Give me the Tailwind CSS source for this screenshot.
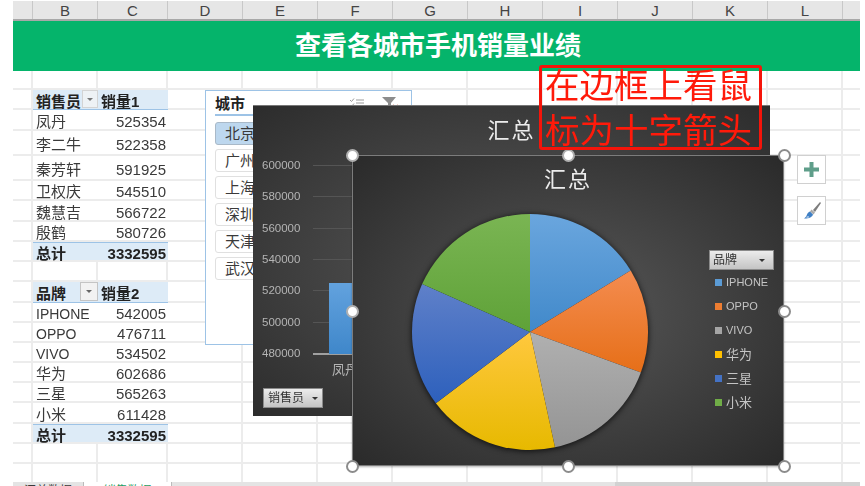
<!DOCTYPE html>
<html lang="zh-CN">

<head>
  <meta charset="UTF-8">
  <title>查看各城市手机销量业绩</title>
  <script src="https://cdn.jsdelivr.net/npm/@tailwindcss/browser@4"></script>
</head>

<body class="bg-white">
  <div class="relative w-[865px] h-[486px] overflow-hidden pl-[13px] pt-px blur-[0.4px] text-[#3a3a3a] font-['Liberation_Sans','Noto_Sans_CJK_SC',sans-serif]">
    <div class="relative w-[847px]">
      <!-- column letters -->
      <div class="flex h-[20px] bg-[#e6e6e6] border-b-2 border-[#a8a8a8] text-[15px] leading-[19px] text-[#444] text-center">
        <div class="w-[20px] border-r border-[#c8c8c8]"></div>
        <div class="w-[65px] border-r border-[#c8c8c8]">B</div>
        <div class="w-[70px] border-r border-[#c8c8c8]">C</div>
        <div class="w-[75px] border-r border-[#c8c8c8]">D</div>
        <div class="w-[75px] border-r border-[#c8c8c8]">E</div>
        <div class="w-[75px] border-r border-[#c8c8c8]">F</div>
        <div class="w-[75px] border-r border-[#c8c8c8]">G</div>
        <div class="w-[75px] border-r border-[#c8c8c8]">H</div>
        <div class="w-[75px] border-r border-[#c8c8c8]">I</div>
        <div class="w-[75px] border-r border-[#c8c8c8]">J</div>
        <div class="w-[75px] border-r border-[#c8c8c8]">K</div>
        <div class="w-[75px] border-r border-[#c8c8c8]">L</div>
        <div class="flex-1"></div>
      </div>

      <!-- banner -->
      <div class="flex items-center justify-center h-[50px] pl-[3px] bg-[#05b46b] text-white text-[26px] font-bold">查看各城市手机销量业绩</div>

      <!-- cells -->
      <div class="relative">
        <!-- vertical gridlines -->
        <div class="absolute inset-0 flex">
          <div class="w-[20px] border-r-2 border-[#ececec]"></div>
          <div class="w-[65px] border-r-2 border-[#ececec]"></div>
          <div class="w-[70px] border-r-2 border-[#ececec]"></div>
          <div class="w-[75px] border-r-2 border-[#ececec]"></div>
          <div class="w-[75px] border-r-2 border-[#ececec]"></div>
          <div class="w-[75px] border-r-2 border-[#ececec]"></div>
          <div class="w-[75px] border-r-2 border-[#ececec]"></div>
          <div class="w-[75px] border-r-2 border-[#ececec]"></div>
          <div class="w-[75px] border-r-2 border-[#ececec]"></div>
          <div class="w-[75px] border-r-2 border-[#ececec]"></div>
          <div class="w-[75px] border-r-2 border-[#ececec]"></div>
          <div class="w-[75px] border-r-2 border-[#ececec]"></div>
        </div>

        <div class="relative text-[15px] leading-none">
          <div class="h-[19px] border-b-2 border-[#ececec]"></div>

          <div class="flex h-[20px] pl-[20px] border-b-2 border-[#ececec] font-bold text-[#222]">
            <div class="relative flex items-center w-[65px] pl-[3px] pt-[3px] -mb-[2px] bg-[#ddebf7] border-b border-[#9dc3e6]">销售员
              <div class="absolute right-0 top-0 flex items-center justify-center w-[16px] h-[18px] bg-[#eef2f5] border border-[#d4d4d4]"><div class="border-x-[3px] border-t-[3px] border-x-transparent border-t-[#777]"></div></div>
            </div>
            <div class="flex items-center w-[70px] pl-[3px] pt-[3px] -mb-[2px] bg-[#ddebf7] border-b border-[#9dc3e6]">销量1</div>
          </div>
          <div class="flex h-[21px] pl-[20px] border-b-2 border-[#ececec]">
            <div class="flex items-center w-[65px] pl-[3px] pt-[3px] bg-white">凤丹</div>
            <div class="flex items-center justify-end w-[70px] pr-[2px] pt-[3px] bg-white">525354</div>
          </div>
          <div class="flex h-[25px] pl-[20px] border-b-2 border-[#ececec]">
            <div class="flex items-center w-[65px] pl-[3px] pt-[3px] bg-white">李二牛</div>
            <div class="flex items-center justify-end w-[70px] pr-[2px] pt-[3px] bg-white">522358</div>
          </div>
          <div class="flex h-[25px] pl-[20px] border-b-2 border-[#ececec]">
            <div class="flex items-center w-[65px] pl-[3px] pt-[3px] bg-white">秦芳轩</div>
            <div class="flex items-center justify-end w-[70px] pr-[2px] pt-[3px] bg-white">591925</div>
          </div>
          <div class="flex h-[20px] pl-[20px] border-b-2 border-[#ececec]">
            <div class="flex items-center w-[65px] pl-[3px] pt-[3px] bg-white">卫权庆</div>
            <div class="flex items-center justify-end w-[70px] pr-[2px] pt-[3px] bg-white">545510</div>
          </div>
          <div class="flex h-[21px] pl-[20px] border-b-2 border-[#ececec]">
            <div class="flex items-center w-[65px] pl-[3px] pt-[3px] bg-white">魏慧吉</div>
            <div class="flex items-center justify-end w-[70px] pr-[2px] pt-[3px] bg-white">566722</div>
          </div>
          <div class="flex h-[20px] pl-[20px] border-b-2 border-[#ececec]">
            <div class="flex items-center w-[65px] pl-[3px] pt-[3px] bg-white">殷鹤</div>
            <div class="flex items-center justify-end w-[70px] pr-[2px] pt-[3px] bg-white">580726</div>
          </div>
          <div class="flex h-[20px] pl-[20px] border-b-2 border-[#ececec] font-bold text-[#222]">
            <div class="flex items-center w-[65px] pl-[3px] pt-[3px] bg-[#ddebf7] border-t border-[#9dc3e6]">总计</div>
            <div class="flex items-center justify-end w-[70px] pr-[2px] pt-[3px] bg-[#ddebf7] border-t border-[#9dc3e6]">3332595</div>
          </div>
          <div class="h-[20px] border-b-2 border-[#ececec]"></div>

          <div class="flex h-[21px] pl-[20px] border-b-2 border-[#ececec] font-bold text-[#222]">
            <div class="relative flex items-center w-[65px] pl-[3px] pt-[3px] -mb-[2px] bg-[#ddebf7] border-b border-[#9dc3e6]">品牌
              <div class="absolute right-0 top-0 flex items-center justify-center w-[18px] h-[19px] bg-[#f2f2f2] border border-[#c4c4c4]"><div class="border-x-[3px] border-t-[3px] border-x-transparent border-t-[#666]"></div></div>
            </div>
            <div class="flex items-center w-[70px] pl-[3px] pt-[3px] -mb-[2px] bg-[#ddebf7] border-b border-[#9dc3e6]">销量2</div>
          </div>
          <div class="flex h-[20px] pl-[20px] border-b-2 border-[#ececec]">
            <div class="flex items-center w-[65px] pl-[3px] pt-[3px] bg-white text-[14px]">IPHONE</div>
            <div class="flex items-center justify-end w-[70px] pr-[2px] pt-[3px] bg-white">542005</div>
          </div>
          <div class="flex h-[20px] pl-[20px] border-b-2 border-[#ececec]">
            <div class="flex items-center w-[65px] pl-[3px] pt-[3px] bg-white text-[14px]">OPPO</div>
            <div class="flex items-center justify-end w-[70px] pr-[2px] pt-[3px] bg-white">476711</div>
          </div>
          <div class="flex h-[20px] pl-[20px] border-b-2 border-[#ececec]">
            <div class="flex items-center w-[65px] pl-[3px] pt-[3px] bg-white text-[14px]">VIVO</div>
            <div class="flex items-center justify-end w-[70px] pr-[2px] pt-[3px] bg-white">534502</div>
          </div>
          <div class="flex h-[20px] pl-[20px] border-b-2 border-[#ececec]">
            <div class="flex items-center w-[65px] pl-[3px] pt-[3px] bg-white">华为</div>
            <div class="flex items-center justify-end w-[70px] pr-[2px] pt-[3px] bg-white">602686</div>
          </div>
          <div class="flex h-[20px] pl-[20px] border-b-2 border-[#ececec]">
            <div class="flex items-center w-[65px] pl-[3px] pt-[3px] bg-white">三星</div>
            <div class="flex items-center justify-end w-[70px] pr-[2px] pt-[3px] bg-white">565263</div>
          </div>
          <div class="flex h-[21px] pl-[20px] border-b-2 border-[#ececec]">
            <div class="flex items-center w-[65px] pl-[3px] pt-[3px] bg-white">小米</div>
            <div class="flex items-center justify-end w-[70px] pr-[2px] pt-[3px] bg-white">611428</div>
          </div>
          <div class="flex h-[20px] pl-[20px] border-b-2 border-[#ececec] font-bold text-[#222]">
            <div class="flex items-center w-[65px] pl-[3px] pt-[3px] bg-[#ddebf7] border-t border-[#9dc3e6]">总计</div>
            <div class="flex items-center justify-end w-[70px] pr-[2px] pt-[3px] bg-[#ddebf7] border-t border-[#9dc3e6]">3332595</div>
          </div>
          <div class="h-[20px] border-b-2 border-[#ececec]"></div>
          <div class="h-[18px]"></div>
        </div>
      </div>

      <!-- sheet tabs, cut off by the window -->
      <div class="relative flex h-[20px] bg-[#e4e4e4] text-[12px] leading-none">
        <div class="w-[71px] pt-[3px] text-center border-r border-[#bbb]">汇总数据</div>
        <div class="w-[88px] pt-[3px] text-center bg-white text-[#1f9d63] border-r border-[#bbb]">销售数据</div>
        <div class="w-[443px]"></div>
        <div class="flex-1 bg-[#d2d2d2]"></div>
      </div>
    </div>

    <!-- slicer -->
    <div class="absolute left-[205px] top-[90px] w-[207px] h-[255px] px-[9px] pt-[3px] bg-white border border-[#9dc3e6] text-[15px] leading-none">
      <div class="flex items-center h-[22px] border-b-2 border-[#9dc3e6] pb-[2px] font-bold text-[#222] whitespace-nowrap">
        <span>城市</span>
        <svg class="ml-[105px]" width="14" height="10" viewBox="0 0 14 10" fill="none" stroke="#9a9a9a" stroke-width="1"><path d="M0 2l1.500 1.500L4 0.500M0 7l1.500 1.500L4 5.500M6 2h8M6 5h8M6 8h8" /></svg>
        <svg class="ml-[18px]" width="17" height="12" viewBox="0 0 17 12"><path d="M0 0h14L9 6v6H6V6z" fill="#8c8c8c" /><path d="M11 8l5 4M16 8l-5 4" stroke="#e2573a" stroke-width="1.500" /></svg>
      </div>
      <div class="flex flex-col gap-[4px] mt-[6px]">
        <div class="h-[23px] pl-[9px] flex items-center rounded-[3px] bg-[#bdd7ee] border border-[#a9b9c8]">北京</div>
        <div class="h-[23px] pl-[9px] flex items-center rounded-[3px] border border-[#e0e0e0]">广州</div>
        <div class="h-[23px] pl-[9px] flex items-center rounded-[3px] border border-[#e0e0e0]">上海</div>
        <div class="h-[23px] pl-[9px] flex items-center rounded-[3px] border border-[#e0e0e0]">深圳</div>
        <div class="h-[23px] pl-[9px] flex items-center rounded-[3px] border border-[#e0e0e0]">天津</div>
        <div class="h-[23px] pl-[9px] flex items-center rounded-[3px] border border-[#e0e0e0]">武汉</div>
      </div>
    </div>

    <!-- column chart behind -->
    <div class="absolute left-[253px] top-[105px] w-[517px] h-[311px] overflow-hidden bg-[radial-gradient(ellipse_at_center,#5a5a5a_0%,#2c2c2c_100%)] border-t border-[#777]">
      <div class="h-[44px] pt-[6px] text-center text-[22px] leading-[38px] tracking-[2px] text-[#ececec]">汇总</div>
      <div class="text-[11.5px] leading-none text-[#b4b4b4]">
        <div class="flex items-center h-[31.33px]"><span class="w-[60px] pl-[9px]">600000</span><div class="flex-1 h-px bg-[#555]"></div></div>
        <div class="flex items-center h-[31.33px]"><span class="w-[60px] pl-[9px]">580000</span><div class="flex-1 h-px bg-[#555]"></div></div>
        <div class="flex items-center h-[31.33px]"><span class="w-[60px] pl-[9px]">560000</span><div class="flex-1 h-px bg-[#555]"></div></div>
        <div class="flex items-center h-[31.33px]"><span class="w-[60px] pl-[9px]">540000</span><div class="flex-1 h-px bg-[#555]"></div></div>
        <div class="flex items-center h-[31.33px]"><span class="w-[60px] pl-[9px]">520000</span><div class="flex-1 h-px bg-[#555]"></div></div>
        <div class="flex items-center h-[31.33px]"><span class="w-[60px] pl-[9px]">500000</span><div class="flex-1 h-px bg-[#555]"></div></div>
        <div class="flex items-center h-[31.33px]"><span class="w-[60px] pl-[9px]">480000</span><div class="flex-1 h-[2px] bg-[#a0a0a0]"></div></div>
      </div>
      <div class="absolute left-[76px] top-[177px] w-[40px] h-[71px] bg-gradient-to-b from-[#62a2de] to-[#3f87ca]"></div>
      <div class="absolute left-[79px] top-[257px] text-[13px] leading-none text-[#b4b4b4]">凤丹</div>
      <div class="absolute left-[10px] top-[282px] flex items-center justify-between w-[60px] h-[20px] px-[4px] bg-gradient-to-b from-[#ececec] to-[#c4c4c4] border border-[#8a8a8a] text-[12px] leading-none text-[#333]">
        <span>销售员</span>
        <div class="border-x-[3px] border-t-[3px] border-x-transparent border-t-[#333]"></div>
      </div>
    </div>

    <!-- pie chart in front -->
    <div class="absolute left-[352px] top-[155px] w-[432px] h-[311px] bg-[radial-gradient(ellipse_at_center,#585858_0%,#2a2a2a_100%)] border border-[#7c7c7c] shadow-[0_1px_2px_rgba(0,0,0,0.3)]">
      <div class="h-[50px] text-center text-[22px] leading-[48px] tracking-[2px] text-[#ececec]">汇总</div>
      <svg class="absolute -left-px -top-px drop-shadow-[0_1px_3px_rgba(0,0,0,0.8)]" width="432" height="311" viewBox="0 0 432 311">
        <defs>
          <linearGradient id="sliceBlue" x1="0" y1="0" x2="0" y2="1"><stop offset="0" stop-color="#6aa6de" /><stop offset="1" stop-color="#4189ca" /></linearGradient>
          <linearGradient id="sliceOrange" x1="0" y1="0" x2="0" y2="1"><stop offset="0" stop-color="#f48c50" /><stop offset="1" stop-color="#e66f18" /></linearGradient>
          <linearGradient id="sliceGray" x1="0" y1="0" x2="0" y2="1"><stop offset="0" stop-color="#b0b0b0" /><stop offset="1" stop-color="#949494" /></linearGradient>
          <linearGradient id="sliceYellow" x1="0" y1="0" x2="0" y2="1"><stop offset="0" stop-color="#ffc83e" /><stop offset="1" stop-color="#e7b900" /></linearGradient>
          <linearGradient id="sliceNavy" x1="0" y1="0" x2="0" y2="1"><stop offset="0" stop-color="#5f80c9" /><stop offset="1" stop-color="#2d60bc" /></linearGradient>
          <linearGradient id="sliceGreen" x1="0" y1="0" x2="0" y2="1"><stop offset="0" stop-color="#7ab553" /><stop offset="1" stop-color="#5fa238" /></linearGradient>
        </defs>
        <path d="M178 177L178 59A118 118 0 0 1 278.67 115.43Z" fill="url(#sliceBlue)" />
        <path d="M178 177L278.67 115.43A118 118 0 0 1 288.85 217.45Z" fill="url(#sliceOrange)" />
        <path d="M178 177L288.85 217.45A118 118 0 0 1 202.96 292.33Z" fill="url(#sliceGray)" />
        <path d="M178 177L202.96 292.33A118 118 0 0 1 83.88 248.18Z" fill="url(#sliceYellow)" />
        <path d="M178 177L83.88 248.18A118 118 0 0 1 70.16 129.09Z" fill="url(#sliceNavy)" />
        <path d="M178 177L70.16 129.09A118 118 0 0 1 178 59Z" fill="url(#sliceGreen)" />
      </svg>

      <!-- legend -->
      <div class="absolute left-[356px] top-[94px] w-[65px] text-[11px] leading-none text-[#c4c4c4]">
        <div class="flex items-center justify-between h-[20px] px-[3px] bg-gradient-to-b from-[#ececec] to-[#c4c4c4] border border-[#8a8a8a] text-[12px] text-[#333]">
          <span>品牌</span>
          <div class="mr-[5px] border-x-[3px] border-t-[3px] border-x-transparent border-t-[#333]"></div>
        </div>
        <div class="flex items-center gap-[4px] h-[24px] pl-[6px]"><div class="w-[7px] h-[7px] bg-[#5b9bd5]"></div>IPHONE</div>
        <div class="flex items-center gap-[4px] h-[24px] pl-[6px]"><div class="w-[7px] h-[7px] bg-[#ed7d31]"></div>OPPO</div>
        <div class="flex items-center gap-[4px] h-[24px] pl-[6px]"><div class="w-[7px] h-[7px] bg-[#a5a5a5]"></div>VIVO</div>
        <div class="flex items-center gap-[4px] h-[24px] pl-[6px] text-[13px]"><div class="w-[7px] h-[7px] bg-[#ffc000]"></div>华为</div>
        <div class="flex items-center gap-[4px] h-[24px] pl-[6px] text-[13px]"><div class="w-[7px] h-[7px] bg-[#4472c4]"></div>三星</div>
        <div class="flex items-center gap-[4px] h-[24px] pl-[6px] text-[13px]"><div class="w-[7px] h-[7px] bg-[#70ad47]"></div>小米</div>
      </div>

      <!-- selection handles -->
      <div class="absolute -left-[7px] -top-[7px] w-[13px] h-[13px] rounded-full bg-white border-2 border-[#b0b0b0]"></div>
      <div class="absolute left-[209px] -top-[7px] w-[13px] h-[13px] rounded-full bg-white border-2 border-[#b0b0b0]"></div>
      <div class="absolute -right-[8px] -top-[7px] w-[13px] h-[13px] rounded-full bg-white border-2 border-[#8c8c8c]"></div>
      <div class="absolute -left-[7px] top-[149px] w-[13px] h-[13px] rounded-full bg-white border-2 border-[#b0b0b0]"></div>
      <div class="absolute -right-[8px] top-[149px] w-[13px] h-[13px] rounded-full bg-white border-2 border-[#8c8c8c]"></div>
      <div class="absolute -left-[7px] -bottom-[8px] w-[13px] h-[13px] rounded-full bg-white border-2 border-[#8c8c8c]"></div>
      <div class="absolute left-[209px] -bottom-[8px] w-[13px] h-[13px] rounded-full bg-white border-2 border-[#8c8c8c]"></div>
      <div class="absolute -right-[8px] -bottom-[8px] w-[13px] h-[13px] rounded-full bg-white border-2 border-[#8c8c8c]"></div>
    </div>

    <!-- chart side buttons -->
    <div class="absolute left-[797px] top-[155px] flex flex-col gap-[12px]">
      <div class="flex items-center justify-center w-[29px] h-[29px] bg-white border border-[#d0d0d0]">
        <svg width="15" height="15" viewBox="0 0 15 15"><path d="M5.500 0h4v5.500H15v4H9.500V15h-4V9.500H0v-4h5.500z" fill="#5f9e8a" /></svg>
      </div>
      <div class="flex items-center justify-center w-[29px] h-[29px] bg-white border border-[#d0d0d0]">
        <svg width="20" height="20" viewBox="0 0 20 20"><path d="M11 9l7-8 1 1-6 9z" fill="#7d7d7d" /><path d="M9.500 8.500l3.500 3-1.500 2-3.500-3z" fill="#a8a8a8" /><path d="M8 10.500l3 3c-1 2.500-3 4-9 4 2-1.500 2.500-2.500 3-4 .5-1.500 1.500-2.500 3-3z" fill="#3f7fc4" /><path d="M4.500 15.500l2-.5 1 1.500-3 .5z" fill="#a9c8e8" /></svg>
      </div>
    </div>

    <!-- red annotation -->
    <div class="absolute left-[539px] top-[65px] w-[223px] h-[85px] rounded-[3px] border-[3px] border-[#f5140a] pl-[3px] text-[34.500px] leading-[45px] text-[#ff1a0a] whitespace-nowrap">
      <div class="-mt-[4px]">在边框上看鼠</div>
      <div>标为十字箭头</div>
    </div>
  </div>
</body>

</html>
